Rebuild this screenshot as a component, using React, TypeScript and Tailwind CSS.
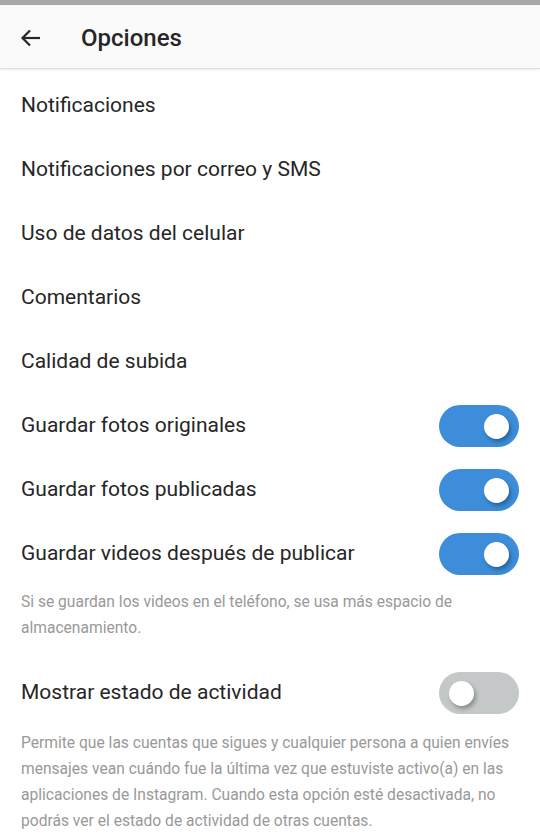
const Toggle = ({ on }: { on: boolean }) => {
    return (
        <div
            className={
                on
                    ? 'w-[80px] h-[42px] rounded-full bg-[#3d8ddb] flex items-center justify-end pr-[10px]'
                    : 'w-[80px] h-[42px] rounded-full bg-[#c5c8c8] flex items-center justify-start pl-[10px]'
            }
        >
            <div className="w-[25px] h-[25px] rounded-full bg-white shadow-[2px_3px_4px_rgba(0,0,0,0.3)]" />
        </div>
    )
}

const App = () => {
    const links = [
        'Notificaciones',
        'Notificaciones por correo y SMS',
        'Uso de datos del celular',
        'Comentarios',
        'Calidad de subida',
    ]
    const switches = [
        { txt: 'Guardar fotos originales', on: true },
        { txt: 'Guardar fotos publicadas', on: true },
        { txt: 'Guardar videos después de publicar', on: true },
    ]
    return (
        <div className="w-[540px] h-[840px] overflow-hidden bg-white font-['Roboto',sans-serif]">
            <div className="h-[5px] bg-[#a8a8a8]" />
            <div className="h-[64px] bg-[#fafafa] flex items-center pt-[3px] border-b border-[#dcdcdc] shadow-[0_1px_2px_rgba(0,0,0,0.08)]">
                <svg className="ml-[19px]" width="24" height="24" viewBox="0 0 24 24" fill="none" stroke="#262626" strokeWidth="2.2">
                    <path d="M21 12H3.5" />
                    <path d="M11 4.5L3.5 12l7.5 7.5" />
                </svg>
                <span className="ml-[38px] text-[24px] font-medium text-[#262626]">Opciones</span>
            </div>
            <div className="pt-[5px]">
                {links.map((v, i) => {
                    return (
                        <div key={i} className="h-[64px] flex items-center px-[21px] text-[21px] text-[#262626]">
                            {v}
                        </div>
                    )
                })}
                {switches.map((v, i) => {
                    return (
                        <div key={i} className="h-[64px] flex items-center justify-between pl-[21px] pr-[21px] text-[21px] text-[#262626]">
                            <span>{v.txt}</span>
                            <Toggle on={v.on} />
                        </div>
                    )
                })}
                <p className="pt-[3px] px-[21px] text-[15.6px] leading-[26px] text-[#999999]">
                    Si se guardan los videos en el teléfono, se usa más espacio de almacenamiento.
                </p>
                <div className="mt-[20px] h-[64px] flex items-center justify-between px-[21px] text-[21px] text-[#262626]">
                    <span>Mostrar estado de actividad</span>
                    <Toggle on={false} />
                </div>
                <p className="pt-[5px] px-[21px] text-[15.6px] leading-[26px] text-[#999999]">
                    Permite que las cuentas que sigues y cualquier persona a quien envíes mensajes vean cuándo fue la última vez que estuviste activo(a) en las aplicaciones de Instagram. Cuando esta opción esté desactivada, no podrás ver el estado de actividad de otras cuentas.
                </p>
            </div>
        </div>
    )
}

export default App
